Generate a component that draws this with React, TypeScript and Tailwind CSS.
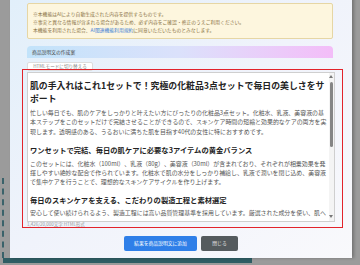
import React from 'react'

const Arrow = ({ down }: { down?: boolean }) => (
  <svg width="4" height="3" viewBox="0 0 4 3" className="block">
    {down ? <polygon points="0,0 4,0 2,3" fill="#777" /> : <polygon points="0,3 4,3 2,0" fill="#777" />}
  </svg>
)

const App = () => {
  return (
    <div className="relative h-[265px] w-[360px] overflow-hidden bg-[#9b9b9b] font-['Noto_Sans_CJK_JP','Noto_Sans',sans-serif]">
      <div className="flex h-[258px]">
        {/* page behind the overlay */}
        <div className="flex w-[10px] flex-col justify-end">
          <div className="ml-[2px] h-[80px] border-l-2 border-dashed border-[#3a626a]" />
        </div>

        {/* modal */}
        <div className="-mt-[10px] flex h-[268px] w-[342px] flex-col bg-gradient-to-br from-[#e1effa] via-[#f0f3fb] to-[#f9f9fc] px-[17px] pt-[13px] shadow-[2px_0_3px_rgba(0,0,0,0.25)]">
          <div className="h-[36px] w-[306px] rounded-[2px] border border-[#e6d6a4] bg-[#fdf6de] px-[5px] pt-[5.5px] text-[4.8px] leading-[8px] text-[#8a7245]">
            <p>※本機能はAIにより自動生成された内容を提供するものです。</p>
            <p>※事実と異なる情報が含まれる場合があるため、必ず内容をご確認・修正のうえご利用ください。</p>
            <p>
              本機能を利用された場合、<span className="text-[#3d7fd6]">AI関連機能利用規約</span>に同意いただいたものとみなします。
            </p>
          </div>

          <div className="mt-[7px] flex h-[12px] w-[306px] items-center rounded-t-[4px] bg-gradient-to-r from-[#c2e3fa] via-[#dbe1fb] to-[#f3bdf8] px-[5px] text-[4.8px] text-[#444]">
            商品説明文の作成案
          </div>

          <div className="mt-[3.5px] flex h-[9px] w-[66px] items-center justify-center rounded-[2px] border border-[#dddddd] bg-white text-[4.6px] text-[#888]">
            HTMLモードに切り替える
          </div>

          {/* editor */}
          <div className="mt-[1.5px] flex h-[150px] w-[308px] border border-[#cfcfcf] bg-white">
            <div className="flex-1 pl-[2px] pt-[6px]">
              <div className="h-[139px] w-[298.5px] overflow-hidden text-[#222]">
                <h1 className="text-[8.9px] font-bold leading-[13px]">
                  肌の手入れはこれ1セットで！究極の化粧品3点セットで毎日の美しさをサポート
                </h1>
                <p className="mt-[3px] text-[5.94px] leading-[9.3px] text-[#555]">
                  忙しい毎日でも、肌のケアをしっかりと叶えたい方にぴったりの化粧品3点セット。化粧水、乳液、美容液の基本ステップをこのセットだけで完結させることができるので、スキンケア時間の短縮と効果的なケアの両方を実現します。透明感のある、うるおいに満ちた肌を目指す40代の女性に特におすすめです。
                </p>
                <h2 className="mt-[9px] text-[7.3px] font-bold leading-[11px]">
                  ワンセットで完結、毎日の肌ケアに必要な3アイテムの黄金バランス
                </h2>
                <p className="mt-[3px] text-[5.94px] leading-[9.3px] text-[#555]">
                  このセットには、化粧水（100ml）、乳液（80g）、美容液（30ml）が含まれており、それぞれが相乗効果を発揮しやすい絶妙な配合で作られています。化粧水で肌の水分をしっかり補給し、乳液で潤いを閉じ込め、美容液で集中ケアを行うことで、理想的なスキンケアサイクルを作り上げます。
                </p>
                <h2 className="mt-[8px] text-[7.3px] font-bold leading-[11px]">
                  毎日のスキンケアを支える、こだわりの製造工程と素材選定
                </h2>
                <p className="mt-[2px] text-[5.94px] leading-[9.3px] text-[#555]">
                  安心して使い続けられるよう、製造工程には高い品質管理基準を採用しています。厳選された成分を使い、肌への優しさと確かな効果を両立させています。
                </p>
              </div>
            </div>
            <div className="flex w-[6px] flex-col items-center bg-[#f4f4f4] pt-[2px] pb-[3px]">
              <Arrow />
              <div className="mt-[4px] h-[65px] w-[3.5px] rounded-full bg-[#858585]" />
              <div className="flex-1" />
              <Arrow down />
            </div>
          </div>

          <p className="h-[5px] text-[4.5px] leading-[5px] text-[#9a9a9a]">1,426/20,000文字 HTML形式</p>

          <div className="mt-[8.5px] flex justify-center gap-[4px]">
            <button className="h-[15px] w-[73px] rounded-[2px] bg-[#2f7fe8] text-[4.8px] text-white">
              結果を商品説明文に追加
            </button>
            <button className="h-[15px] w-[37px] rounded-[2px] bg-[#555b5e] text-[4.8px] text-[#e6e6e6]">
              閉じる
            </button>
          </div>
        </div>
      </div>
      <div className="ml-[3px] h-[5px] w-[249px] bg-[#2f5d64]" />

      {/* highlight frame */}
      <div className="absolute left-[22px] top-[69px] h-[159px] w-[321px] border-[1.5px] border-[#e2232b]" />
    </div>
  )
}

export default App
